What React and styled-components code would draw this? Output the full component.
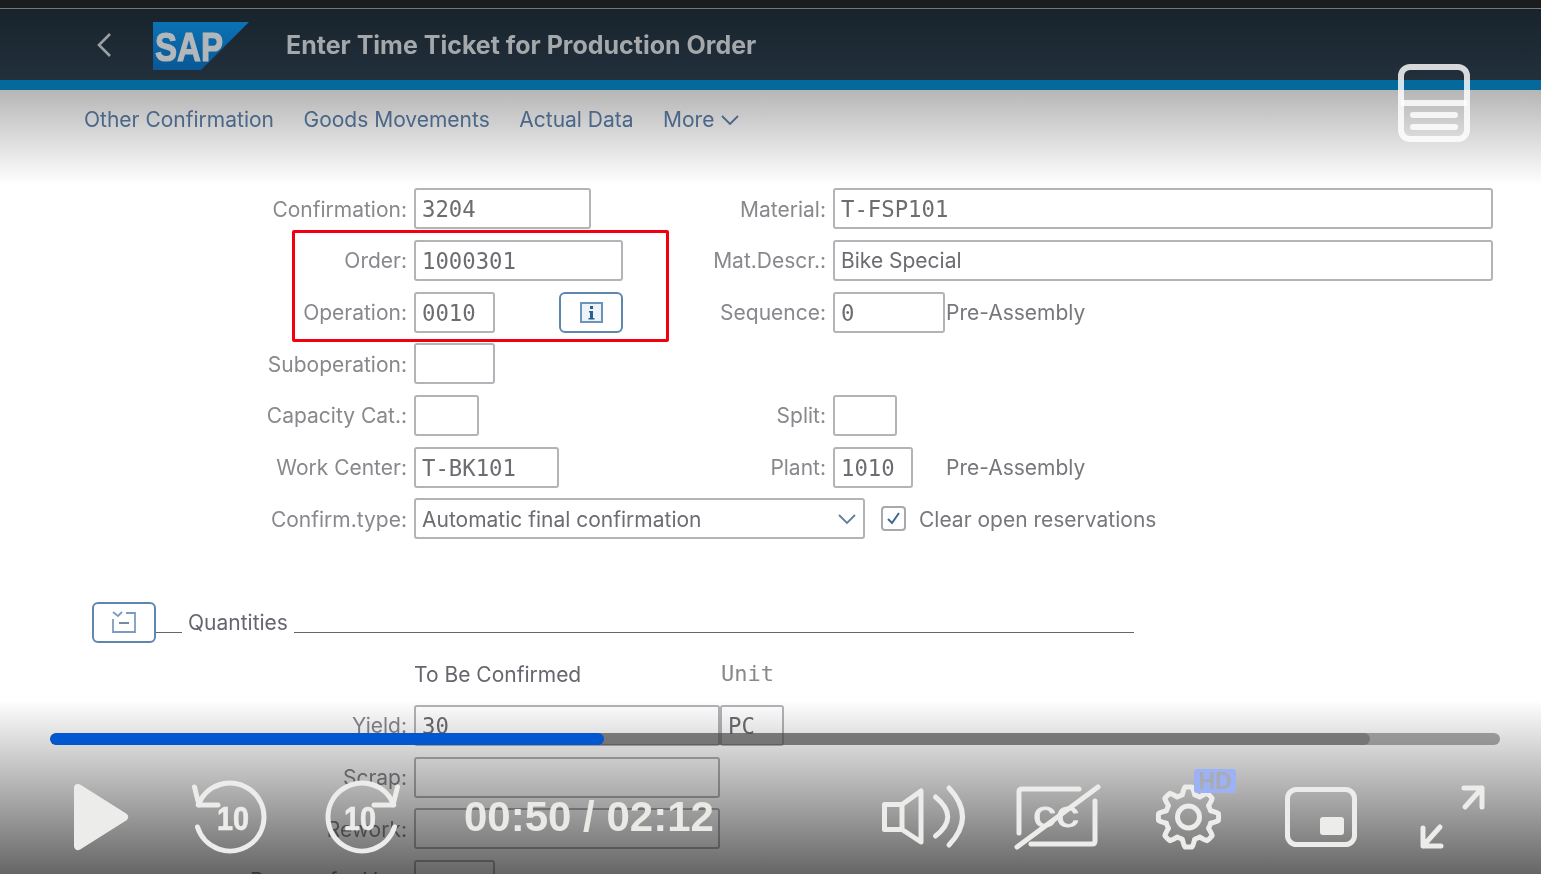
import React from 'react';
import styled, { createGlobalStyle } from 'styled-components';

const GlobalStyle = createGlobalStyle`
  html, body {
    margin: 0;
    padding: 0;
    background: #fff;
  }
`;

const Screen = styled.div`
  position: relative;
  width: 1541px;
  height: 874px;
  overflow: hidden;
  background: #fff;
  font-family: Inter, sans-serif;
  filter: blur(0.6px);
`;

const TopStrip = styled.div`
  height: 8px;
  background: #1b1c1e;
  border-bottom: 1px solid #77777a;
`;

const ShellBar = styled.header`
  height: 71px;
  display: flex;
  align-items: center;
  background: linear-gradient(#18232c, #22303c);
  border-bottom: 10px solid #056a9b;
`;

const BackIcon = styled.svg`
  width: 18px;
  height: 28px;
  margin-left: 96px;
`;

const Logo = styled.svg`
  width: 96px;
  height: 48px;
  margin-left: 39px;
  margin-top: 3px;
`;

const Title = styled.h1`
  margin: 0 0 0 37px;
  font-size: 25px;
  font-weight: 700;
  color: #a4a8ab;
`;

const Toolbar = styled.nav`
  height: 95px;
  box-sizing: border-box;
  padding: 15px 0 0 84px;
  display: flex;
  align-items: flex-start;
  gap: 29.5px;
  background: linear-gradient(#b6b6b6, #fff);
`;

const ToolLink = styled.span`
  display: flex;
  align-items: center;
  gap: 6px;
  font-size: 21px;
  line-height: 30px;
  color: #4a6688;
`;

const Form = styled.main`
  position: relative;
  padding-top: 3.3px;
  display: flex;
  flex-direction: column;
  gap: 10.67px;
`;

const Row = styled.div`
  height: 41px;
  display: grid;
  grid-template-columns: 407px 280px 125px 660px;
  column-gap: 7px;
  align-items: center;
`;

const Label = styled.label`
  grid-column: ${(p) => p.$col || 1};
  padding-top: 1px;
  text-align: right;
  font-size: 21px;
  color: #88888d;
  white-space: nowrap;
`;

const Field = styled.div`
  box-sizing: border-box;
  width: ${(p) => p.$w}px;
  height: 41px;
  padding: 1px 6px 0;
  display: flex;
  align-items: center;
  background: #fff;
  border: 2px solid #b4b4b8;
  border-radius: 3px;
  color: #6c6c71;
  white-space: nowrap;
  font-family: ${(p) => (p.$text ? 'Inter, sans-serif' : "'DejaVu Sans Mono', monospace")};
  font-size: ${(p) => (p.$text ? 21 : 22.3)}px;
`;

const Cell = styled.div`
  grid-column: ${(p) => p.$col || 2} / ${(p) => p.$end || 'auto'};
  display: flex;
  align-items: center;
`;

const IconButton = styled.button`
  box-sizing: border-box;
  width: 64px;
  height: 41px;
  padding: 0;
  margin-left: ${(p) => p.$offset || 0}px;
  display: flex;
  align-items: center;
  justify-content: center;
  background: #fff;
  border: 2px solid #5f86ad;
  border-radius: 6px;
`;

const FixedText = styled.span`
  margin-left: ${(p) => p.$offset}px;
  padding-top: 1px;
  font-size: 21px;
  color: #77777c;
  white-space: nowrap;
`;

const Chevron = styled.svg`
  margin-left: auto;
  margin-right: 0;
`;

const Check = styled.div`
  box-sizing: border-box;
  width: 25px;
  height: 25px;
  margin: 0 13px 0 16px;
  display: flex;
  align-items: center;
  justify-content: center;
  border: 2px solid #a8a8ae;
  border-radius: 4px;
`;

const Spacer = styled.div`
  height: 41px;
`;

const QuantitiesHead = styled.div`
  height: 41px;
  margin-left: 92px;
  width: 1042px;
  display: flex;
  align-items: center;
`;

const Rule = styled.div`
  flex: ${(p) => (p.$w ? `0 0 ${p.$w}px` : 1)};
  height: 1px;
  align-self: flex-end;
  margin-bottom: 10px;
  background: #66666a;
`;

const GroupTitle = styled.span`
  margin: 0 6px;
  padding-top: 1px;
  font-size: 21px;
  color: #66666e;
`;

const ColumnHead = styled.span`
  flex: none;
  width: ${(p) => p.$w || 'auto'};
  padding-top: 1px;
  font-size: 21px;
  color: #66666e;
`;

const UnitHead = styled.span`
  font-family: 'DejaVu Sans Mono', monospace;
  font-size: 22px;
  color: #88888d;
`;

const RedFrame = styled.div`
  position: absolute;
  left: 292px;
  top: 45px;
  width: 377px;
  height: 112px;
  box-sizing: border-box;
  border: 3px solid #f2000f;
  border-radius: 2px;
  pointer-events: none;
`;

const PanelToggle = styled.svg`
  position: absolute;
  left: 1398px;
  top: 64px;
  width: 72px;
  height: 78px;
`;

const Player = styled.div`
  position: absolute;
  left: 0;
  right: 0;
  bottom: 0;
  height: 174px;
  box-sizing: border-box;
  padding-top: 33px;
  background: linear-gradient(rgba(0, 0, 0, 0), rgba(0, 0, 0, 0.6));
`;

const Progress = styled.div`
  position: relative;
  height: 12px;
  margin: 0 41px 0 50px;
  border-radius: 6px;
  background: rgba(80, 80, 80, 0.5);
  overflow: hidden;
`;

const ProgressFill = styled.div`
  position: absolute;
  left: 0;
  top: 0;
  bottom: 0;
  border-radius: 6px;
  background: ${(p) => p.$color};
`;

const Controls = styled.div`
  height: 72px;
  margin-top: 36px;
  padding: 0 55px 0 74px;
  display: flex;
  align-items: center;
`;

const ControlIcon = styled.svg`
  display: block;
  flex: none;
  margin-left: ${(p) => p.$gap || 0}px;
  fill: none;
  stroke: #ececea;
  stroke-width: 5;
  stroke-linecap: round;
  stroke-linejoin: round;
  overflow: visible;
`;

const Digits = styled.text`
  font-family: 'Liberation Sans', sans-serif;
  font-weight: 700;
  fill: #ececea;
  stroke: #ececea;
  stroke-width: 0.7;
`;

const CaptionMark = styled.text`
  font-family: 'Liberation Sans', sans-serif;
  font-weight: 400;
  fill: #ececea;
  stroke: #ececea;
  stroke-width: 0.8;
`;

const Time = styled.span`
  width: 250px;
  margin-left: 64px;
  font-family: 'Liberation Sans', sans-serif;
  font-size: 42px;
  font-weight: 700;
  color: #e9e9e6;
  white-space: nowrap;
`;

const RightControls = styled.div`
  margin-left: auto;
  display: flex;
  align-items: center;
`;

const GearSlot = styled.div`
  position: relative;
  margin-left: 55px;
`;

const HdBadge = styled.span`
  position: absolute;
  left: 39px;
  top: -12px;
  width: 42px;
  height: 24px;
  display: flex;
  align-items: center;
  justify-content: center;
  border-radius: 3px;
  background: #9db2f5;
  color: #a8aab4;
  font-family: 'Liberation Sans', sans-serif;
  font-size: 23px;
  font-weight: 700;
`;

// wavy outline for the settings gear, 8 teeth
const gearPath = (() => {
  const pts = [];
  for (let i = 0; i < 160; i++) {
    const a = (i / 160) * Math.PI * 2;
    const w = Math.cos(a * 8);
    const t = Math.max(-1, Math.min(1, w * 1.7));
    const r = 26.5 + 3.6 * t;
    pts.push(`${(33.5 + r * Math.sin(a)).toFixed(2)} ${(36 - r * Math.cos(a)).toFixed(2)}`);
  }
  return `M${pts.join('L')}Z`;
})();

function Replay({ forward, gap }) {
  return (
    <ControlIcon width={forward ? 74 : 75} height={72} viewBox={`0 0 ${forward ? 74 : 75} 72`} $gap={gap}>
      <g transform={forward ? 'translate(74) scale(-1 1)' : undefined}>
        <path d="M6.2 24A34 34 0 1 1 5.5 46" />
        <path d="M2.5 6L7 24H26" />
      </g>
      <Digits x={forward ? 18 : 25} y={49} fontSize={33} textLength={32} lengthAdjust="spacingAndGlyphs">
        10
      </Digits>
    </ControlIcon>
  );
}

export default function App() {
  return (
    <Screen>
      <GlobalStyle />
      <TopStrip />
      <ShellBar>
        <BackIcon viewBox="0 0 18 28">
          <path d="M14 3L3 14l11 11" fill="none" stroke="#9aa0a4" strokeWidth="2.6" />
        </BackIcon>
        <Logo viewBox="0 0 96 48">
          <defs>
            <linearGradient id="sapBlue" x1="0" y1="0" x2="0" y2="1">
              <stop offset="0" stopColor="#0b73b5" />
              <stop offset="1" stopColor="#0a5794" />
            </linearGradient>
          </defs>
          <polygon points="0,0 96,0 48,48 0,48" fill="url(#sapBlue)" />
          <text
            x="2"
            y="38.500"
            fontFamily="'Liberation Sans', sans-serif"
            fontWeight="700"
            fontSize="40"
            fill="#b4b7ba"
            stroke="#b4b7ba"
            strokeWidth="1.2"
            textLength="68"
            lengthAdjust="spacingAndGlyphs"
          >
            SAP
          </text>
        </Logo>
        <Title>Enter Time Ticket for Production Order</Title>
      </ShellBar>

      <Toolbar>
        <ToolLink>Other Confirmation</ToolLink>
        <ToolLink>Goods Movements</ToolLink>
        <ToolLink>Actual Data</ToolLink>
        <ToolLink>
          More
          <svg width="20" height="12" viewBox="0 0 20 12">
            <path d="M2 2l8 8 8-8" fill="none" stroke="#4a6688" strokeWidth="1.8" />
          </svg>
        </ToolLink>
      </Toolbar>

      <Form>
        <Row>
          <Label>Confirmation:</Label>
          <Cell><Field $w={177}>3204</Field></Cell>
          <Label $col={3}>Material:</Label>
          <Cell $col={4}><Field $w={660}>T-FSP101</Field></Cell>
        </Row>
        <Row>
          <Label>Order:</Label>
          <Cell><Field $w={209}>1000301</Field></Cell>
          <Label $col={3}>Mat.Descr.:</Label>
          <Cell $col={4}><Field $w={660} $text>Bike Special</Field></Cell>
        </Row>
        <Row>
          <Label>Operation:</Label>
          <Cell>
            <Field $w={81}>0010</Field>
            <IconButton $offset={64}>
              <svg width="23" height="21" viewBox="0 0 23 21">
                <rect x="1" y="1" width="21" height="19" fill="#eef3f9" stroke="#6a93bd" strokeWidth="2" />
                <rect x="10" y="4" width="3" height="3" fill="#2c5e92" />
                <path d="M9 9h4v7h1.5v1.5h-6V16H10v-5.500H9z" fill="#2c5e92" />
              </svg>
            </IconButton>
          </Cell>
          <Label $col={3}>Sequence:</Label>
          <Cell $col={4}>
            <Field $w={112}>0</Field>
            <FixedText $offset={1}>Pre-Assembly</FixedText>
          </Cell>
        </Row>
        <Row>
          <Label>Suboperation:</Label>
          <Cell><Field $w={81} /></Cell>
        </Row>
        <Row>
          <Label>Capacity Cat.:</Label>
          <Cell><Field $w={65} /></Cell>
          <Label $col={3}>Split:</Label>
          <Cell $col={4}><Field $w={64} /></Cell>
        </Row>
        <Row>
          <Label>Work Center:</Label>
          <Cell><Field $w={145}>T-BK101</Field></Cell>
          <Label $col={3}>Plant:</Label>
          <Cell $col={4}>
            <Field $w={80}>1010</Field>
            <FixedText $offset={33}>Pre-Assembly</FixedText>
          </Cell>
        </Row>
        <Row>
          <Label>Confirm.type:</Label>
          <Cell $end={5}>
            <Field $w={451} $text>
              Automatic final confirmation
              <Chevron width="20" height="12" viewBox="0 0 20 12">
                <path d="M2 2l8 8 8-8" fill="none" stroke="#5f7f9f" strokeWidth="1.8" />
              </Chevron>
            </Field>
            <Check>
              <svg width="15" height="15" viewBox="0 0 15 15">
                <path d="M2 8l4 4 7-10" fill="none" stroke="#3f6593" strokeWidth="2" />
              </svg>
            </Check>
            <FixedText $offset={0}>Clear open reservations</FixedText>
          </Cell>
        </Row>

        <Spacer />

        <QuantitiesHead>
          <IconButton>
            <svg width="24" height="22" viewBox="0 0 24 22" fill="none" stroke="#7b9cc0" strokeWidth="1.8">
              <path d="M1 1l5 4 4-4" />
              <path d="M1 8v13h22V2H14" />
              <path d="M7 12h10" stroke="#5f7f9f" />
            </svg>
          </IconButton>
          <Rule $w={26} />
          <GroupTitle>Quantities</GroupTitle>
          <Rule />
        </QuantitiesHead>

        <Row>
          <Cell $end={5}>
            <ColumnHead $w="307px">To Be Confirmed</ColumnHead>
            <UnitHead>Unit</UnitHead>
          </Cell>
        </Row>
        <Row>
          <Label>Yield:</Label>
          <Cell $end={5}>
            <Field $w={306}>30</Field>
            <Field $w={64}>PC</Field>
          </Cell>
        </Row>
        <Row>
          <Label>Scrap:</Label>
          <Cell $end={5}><Field $w={306} /></Cell>
        </Row>
        <Row>
          <Label>Rework:</Label>
          <Cell $end={5}><Field $w={306} /></Cell>
        </Row>
        <Row>
          <Label>Reason for Var.:</Label>
          <Cell><Field $w={81} /></Cell>
        </Row>

        <RedFrame />
      </Form>

      <PanelToggle viewBox="0 0 72 78" fill="none" stroke="#fff" strokeOpacity="0.82" strokeWidth="6">
        <rect x="3" y="3" width="66" height="72" rx="9" />
        <path d="M3 39h66" />
        <path d="M15 51h42M15 63h42" strokeLinecap="round" />
      </PanelToggle>

      <Player>
        <Progress>
          <ProgressFill style={{ width: '1320px' }} $color="rgba(60, 60, 60, 0.35)" />
          <ProgressFill style={{ width: '554px' }} $color="#0057d0" />
        </Progress>
        <Controls>
          <ControlIcon width={54} height={72} viewBox="0 0 54 72">
            <polygon points="4,7 50,36 4,65" fill="#ececea" strokeWidth="8" />
          </ControlIcon>
          <Replay gap={64} />
          <Replay forward gap={59} />
          <Time>00:50 / 02:12</Time>
          <RightControls>
            <ControlIcon width={82} height={72} viewBox="0 0 82 72">
              <path d="M2.5 23.5H20L39 10V61L20 48.500H2.500ZM20 23.500V48.500" />
              <path d="M53.500 16Q78 36 53.500 55" />
              <path d="M67 7Q94 36 67 64" />
            </ControlIcon>
            <ControlIcon width={85} height={72} viewBox="0 0 85 72" $gap={51}>
              <path d="M4 52V11Q4 8 7 8H64" />
              <path d="M80 20V60Q80 63 77 63H16" />
              <path d="M2 66L83 6" />
              <CaptionMark x="18" y="46" fontSize="37" textLength="46" lengthAdjust="spacingAndGlyphs">cc</CaptionMark>
            </ControlIcon>
            <GearSlot>
              <ControlIcon width={67} height={72} viewBox="0 0 67 72">
                <path d={gearPath} />
                <circle cx="33.500" cy="36" r="11" />
              </ControlIcon>
              <HdBadge>HD</HdBadge>
            </GearSlot>
            <ControlIcon width={72} height={72} viewBox="0 0 72 72" $gap={63}>
              <rect x="2.500" y="8.500" width="67" height="55" rx="9" />
              <rect x="35" y="36" width="24" height="18" rx="3" fill="#ececea" stroke="none" />
            </ControlIcon>
            <ControlIcon width={67} height={72} viewBox="0 0 67 72" $gap={62}>
              <path d="M45 7H63V26M63 7L46 26" />
              <path d="M4 47V65H22M4 65L21 46" />
            </ControlIcon>
          </RightControls>
        </Controls>
      </Player>
    </Screen>
  );
}
